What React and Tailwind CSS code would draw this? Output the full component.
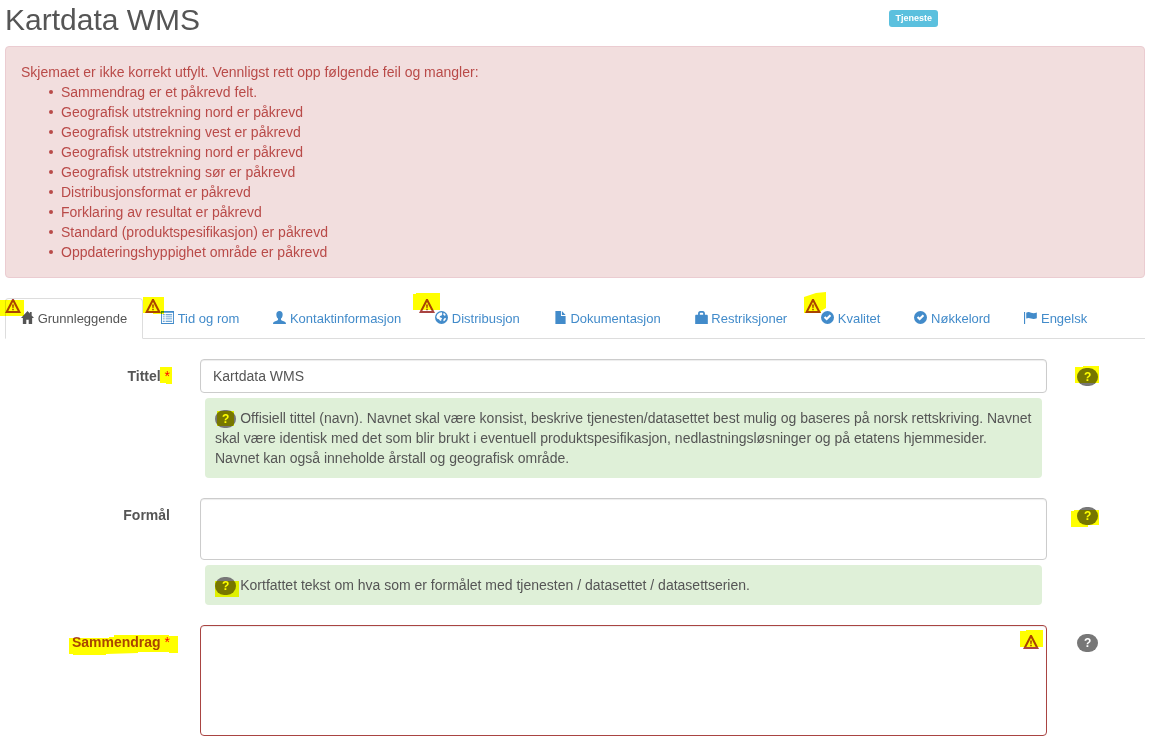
import { useState } from "react";
import clsx from "clsx";

const errors = [
  "Sammendrag er et påkrevd felt.",
  "Geografisk utstrekning nord er påkrevd",
  "Geografisk utstrekning vest er påkrevd",
  "Geografisk utstrekning nord er påkrevd",
  "Geografisk utstrekning sør er påkrevd",
  "Distribusjonsformat er påkrevd",
  "Forklaring av resultat er påkrevd",
  "Standard (produktspesifikasjon) er påkrevd",
  "Oppdateringshyppighet område er påkrevd",
];

const icons = {
  home: <path d="M7 0 0 7.500h2V14h3.700V9.500h2.600V14H12V7.500h2L11.500 4.800V1h-2v1.700z" />,
  list: (
    <>
      <path fillRule="evenodd" d="M0 0h14v14H0zM1 2v11h12V2z" />
      <path d="M2 3.500h2v1H2zM5 3.500h7v1H5zM2 5.800h2v1H2zM5 5.800h7v1H5zM2 8h2v1H2zM5 8h7v1H5zM2 10.500h2v1H2zM5 10.500h7v1H5z" />
    </>
  ),
  user: <path d="M7 0C4.800 0 3.600 1.400 3.600 3.700c0 1.900.700 3.500 1.800 4.500v1.300c-.300.600-1 .900-2.200 1.400C1.300 11.600 0 12.200 0 14h14c0-1.800-1.300-2.400-3.200-3.100-1.200-.500-1.900-.800-2.200-1.400V8.200c1.100-1 1.800-2.600 1.800-4.500C10.400 1.400 9.200 0 7 0z" />,
  globe: (
    <>
      <circle cx="7" cy="7" r="7" />
      <path fill="#fff" d="M7.400 1.400 4.600 2 2.400 3.800 1.400 6.400l1 2 1.800.4 1 1.400 1.400.6.200-1.600 1-1.400L6.200 7 5 6.600l.4-1.200L7.200 4.800l.6-1.600zM9.400 2l-.6 1.800 1.400 1.400.8-.2.400-1.400zM10.800 7.400 9.200 8.800 9 11l1.400-.4 1.600-2.200z" />
    </>
  ),
  file: <path d="M1.500 0h6v5.500h5V14h-11zM8.500 0l4 4.200h-4z" />,
  lock: <path fillRule="evenodd" d="M3.300 4V2.600C3.300 1 4.200 0 5.700 0h2.600c1.500 0 2.400 1 2.400 2.600V4h1.800c.800 0 1.300.600 1.300 1.300V14H.2V5.300C.2 4.600.7 4 1.500 4zM5.200 4h3.600V2.600c0-.500-.2-.8-.8-.8H6c-.6 0-.8.300-.8.800z" />,
  ok: (
    <>
      <circle cx="7" cy="7" r="7" />
      <path fill="#fff" d="m3 7.200 1.600-1.600 1.500 1.400 3.300-3.300L11 5.300l-4.900 4.900z" />
    </>
  ),
  flag: <path d="M0 1h1.200v13H0zM2.400 1.800c2-1 3.500-.7 5.200 0 2 .8 4 .7 6.200-.3v6.300c-2.200 1-4.200 1.100-6.200.3-1.700-.7-3.200-1-5.200 0z" />,
};

const tabs = [
  { id: "grunnleggende", label: "Grunnleggende", icon: "home" },
  { id: "tid", label: "Tid og rom", icon: "list" },
  { id: "kontakt", label: "Kontaktinformasjon", icon: "user" },
  { id: "distribusjon", label: "Distribusjon", icon: "globe" },
  { id: "dokumentasjon", label: "Dokumentasjon", icon: "file" },
  { id: "restriksjoner", label: "Restriksjoner", icon: "lock" },
  { id: "kvalitet", label: "Kvalitet", icon: "ok" },
  { id: "nokkelord", label: "Nøkkelord", icon: "ok" },
  { id: "engelsk", label: "Engelsk", icon: "flag" },
];

// marker strokes, drawn from the top left corner of the marked element
const tabMarks = {
  grunnleggende: "-5,2 19,2 19,18 -5,18",
  tid: "-2,-1 19,-1 19,16 8,16 8,15 -2,15",
  distribusjon: "-6,-4 -3,-4 -3,-5 21,-5 21,12 -6,12",
  kvalitet: "-1,-1 5,-3 11,-5 21,-6 21,10 16,13 16,15 -1,15",
};

function Mark({ points }) {
  return (
    <svg
      className="pointer-events-none absolute top-0 left-0 size-px overflow-visible mix-blend-multiply"
      aria-hidden="true"
    >
      <polygon points={points} fill="#ffff00" />
    </svg>
  );
}

function Icon({ name }) {
  return (
    <svg viewBox="0 0 14 14" className="inline-block size-[13px] align-[-1px]" fill="currentColor" aria-hidden="true">
      {icons[name]}
    </svg>
  );
}

function Warning() {
  return (
    <svg viewBox="0 0 16 14" className="block h-3.5 w-4" aria-label="Feil">
      <path fillRule="evenodd" d="M7.200 0h1.600L16 14H0zM8 3 3.300 12h9.400z" fill="#a94442" />
      <path d="M7.100 5.400h1.800l-.3 3.600H7.400zM7.200 9.800h1.600v1.400H7.200z" fill="#a94442" />
    </svg>
  );
}

const badge = "rounded-[10px] bg-[#777] px-[7px] text-xs leading-[18px] font-bold text-white";

function HelpText({ mark, children }) {
  return (
    <p className="mx-[5px] mt-[5px] rounded bg-[#dff0d8] p-2.5">
      <span className={clsx("relative inline-block h-[18px]", badge)}>
        ?
        <Mark points={mark} />
      </span>{" "}
      {children}
    </p>
  );
}

function Field({ id, label, labelMark, required, invalid, helpMark, help, children }) {
  return (
    <div className="flex gap-[30px]">
      <label htmlFor={id} className="w-[165px] shrink-0 pt-[7px] text-right font-bold">
        <span className={clsx("relative", invalid && "text-[#a94442]")}>
          {label}
          {labelMark && <Mark points={labelMark} />}
        </span>
        {required && (
          <>
            {" "}
            <span className="font-normal text-[#f00]">*</span>
          </>
        )}
      </label>
      <div className="min-w-0 flex-1">
        {children}
        {help}
      </div>
      <div className="w-[68px] shrink-0 pt-[9px]">
        <button type="button" aria-label={"Hjelp: " + label} className={clsx("relative block", badge)}>
          ?
          {helpMark && <Mark points={helpMark} />}
        </button>
      </div>
    </div>
  );
}

const control =
  "block w-full resize-none rounded border bg-white px-3 py-1.5 leading-5 text-[#555] shadow-[inset_0_1px_1px_rgba(0,0,0,0.075)] outline-none";

export default function App() {
  const [active, setActive] = useState("grunnleggende");
  const [title, setTitle] = useState("Kartdata WMS");

  return (
    <div className="bg-white pt-[3px] pr-3 pl-[5px] font-['Liberation_Sans',Arial,sans-serif] text-sm leading-5 text-[#555]">
      <header className="mb-2.5 flex items-start justify-between pr-[207px]">
        <h1 className="text-[30px] leading-[33px]">Kartdata WMS</h1>
        <span className="mt-[7px] rounded-[3px] bg-[#5bc0de] px-1.5 text-[9px] leading-[17px] font-bold text-white">
          Tjeneste
        </span>
      </header>

      <div role="alert" className="mb-5 rounded border border-[#ebccd1] bg-[#f2dede] p-[15px] text-[#b94a48]">
        <p>Skjemaet er ikke korrekt utfylt. Vennligst rett opp følgende feil og mangler:</p>
        <ul>
          {errors.map((e, i) => (
            <li key={i} className="flex items-center pl-7">
              <span className="mr-2 size-1 rounded-full bg-[#b94a48]" />
              {e}
            </li>
          ))}
        </ul>
      </div>

      <nav>
        <ul className="flex flex-wrap gap-x-0.5 border-b border-[#ddd] text-[13px] leading-[19px]">
          {tabs.map((t) => (
            <li key={t.id} className="relative -mb-px">
              <a
                href={"#" + t.id}
                onClick={() => setActive(t.id)}
                className={clsx(
                  "block rounded-t border px-[15px] py-2.5 whitespace-nowrap",
                  active === t.id
                    ? "border-[#ddd] border-b-white bg-white text-[#555]"
                    : "border-transparent text-[#428bca]"
                )}
              >
                <Icon name={t.icon} /> {t.label}
              </a>
              {tabMarks[t.id] && (
                <span className="absolute top-px left-0">
                  <Warning />
                </span>
              )}
              {tabMarks[t.id] && <Mark points={tabMarks[t.id]} />}
            </li>
          ))}
        </ul>
      </nav>

      <form className="mt-5 flex flex-col gap-5">
        <Field
          id="title"
          label="Tittel"
          required
          labelMark="33,-1 45,-1 45,16 39,16 39,15 33,15"
          helpMark="-2,-1 6,-1 6,-2 22,-2 22,15 -2,15"
          help={
            <HelpText mark="2,1 19,1 19,16 2,16">
              Offisiell tittel (navn). Navnet skal være konsist, beskrive tjenesten/datasettet best mulig og baseres
              på norsk rettskriving. Navnet skal være identisk med det som blir brukt i eventuell
              produktspesifikasjon, nedlastningsløsninger og på etatens hjemmesider. Navnet kan også inneholde
              årstall og geografisk område.
            </HelpText>
          }
        >
          <input
            id="title"
            type="text"
            value={title}
            onChange={(e) => setTitle(e.target.value)}
            className={clsx(control, "border-[#ccc]")}
          />
        </Field>

        <Field
          id="purpose"
          label="Formål"
          helpMark="-6,4 -3,4 -3,3 22,3 22,18 11,18 11,20 -6,20"
          help={
            <HelpText mark="0,4 24,4 24,20 0,20">
              Kortfattet tekst om hva som er formålet med tjenesten / datasettet / datasettserien.
            </HelpText>
          }
        >
          <textarea id="purpose" className={clsx(control, "h-[62px] border-[#ccc]")} />
        </Field>

        <Field
          id="abstract"
          label="Sammendrag"
          required
          invalid
          labelMark="-3,4 37,4 37,3 42,3 42,1 97,1 97,2 106,2 106,19 97,19 97,18 66,18 66,19 34,20 34,21 1,21 1,20 -3,20"
        >
          <div className="relative">
            <textarea id="abstract" className={clsx(control, "h-[111px] border-[#a94442]")} />
            <span className="absolute top-2.5 right-2">
              <Warning />
              <Mark points="-3,-4 3,-4 3,-5 20,-5 20,12 -3,12" />
            </span>
          </div>
        </Field>
      </form>
    </div>
  );
}
